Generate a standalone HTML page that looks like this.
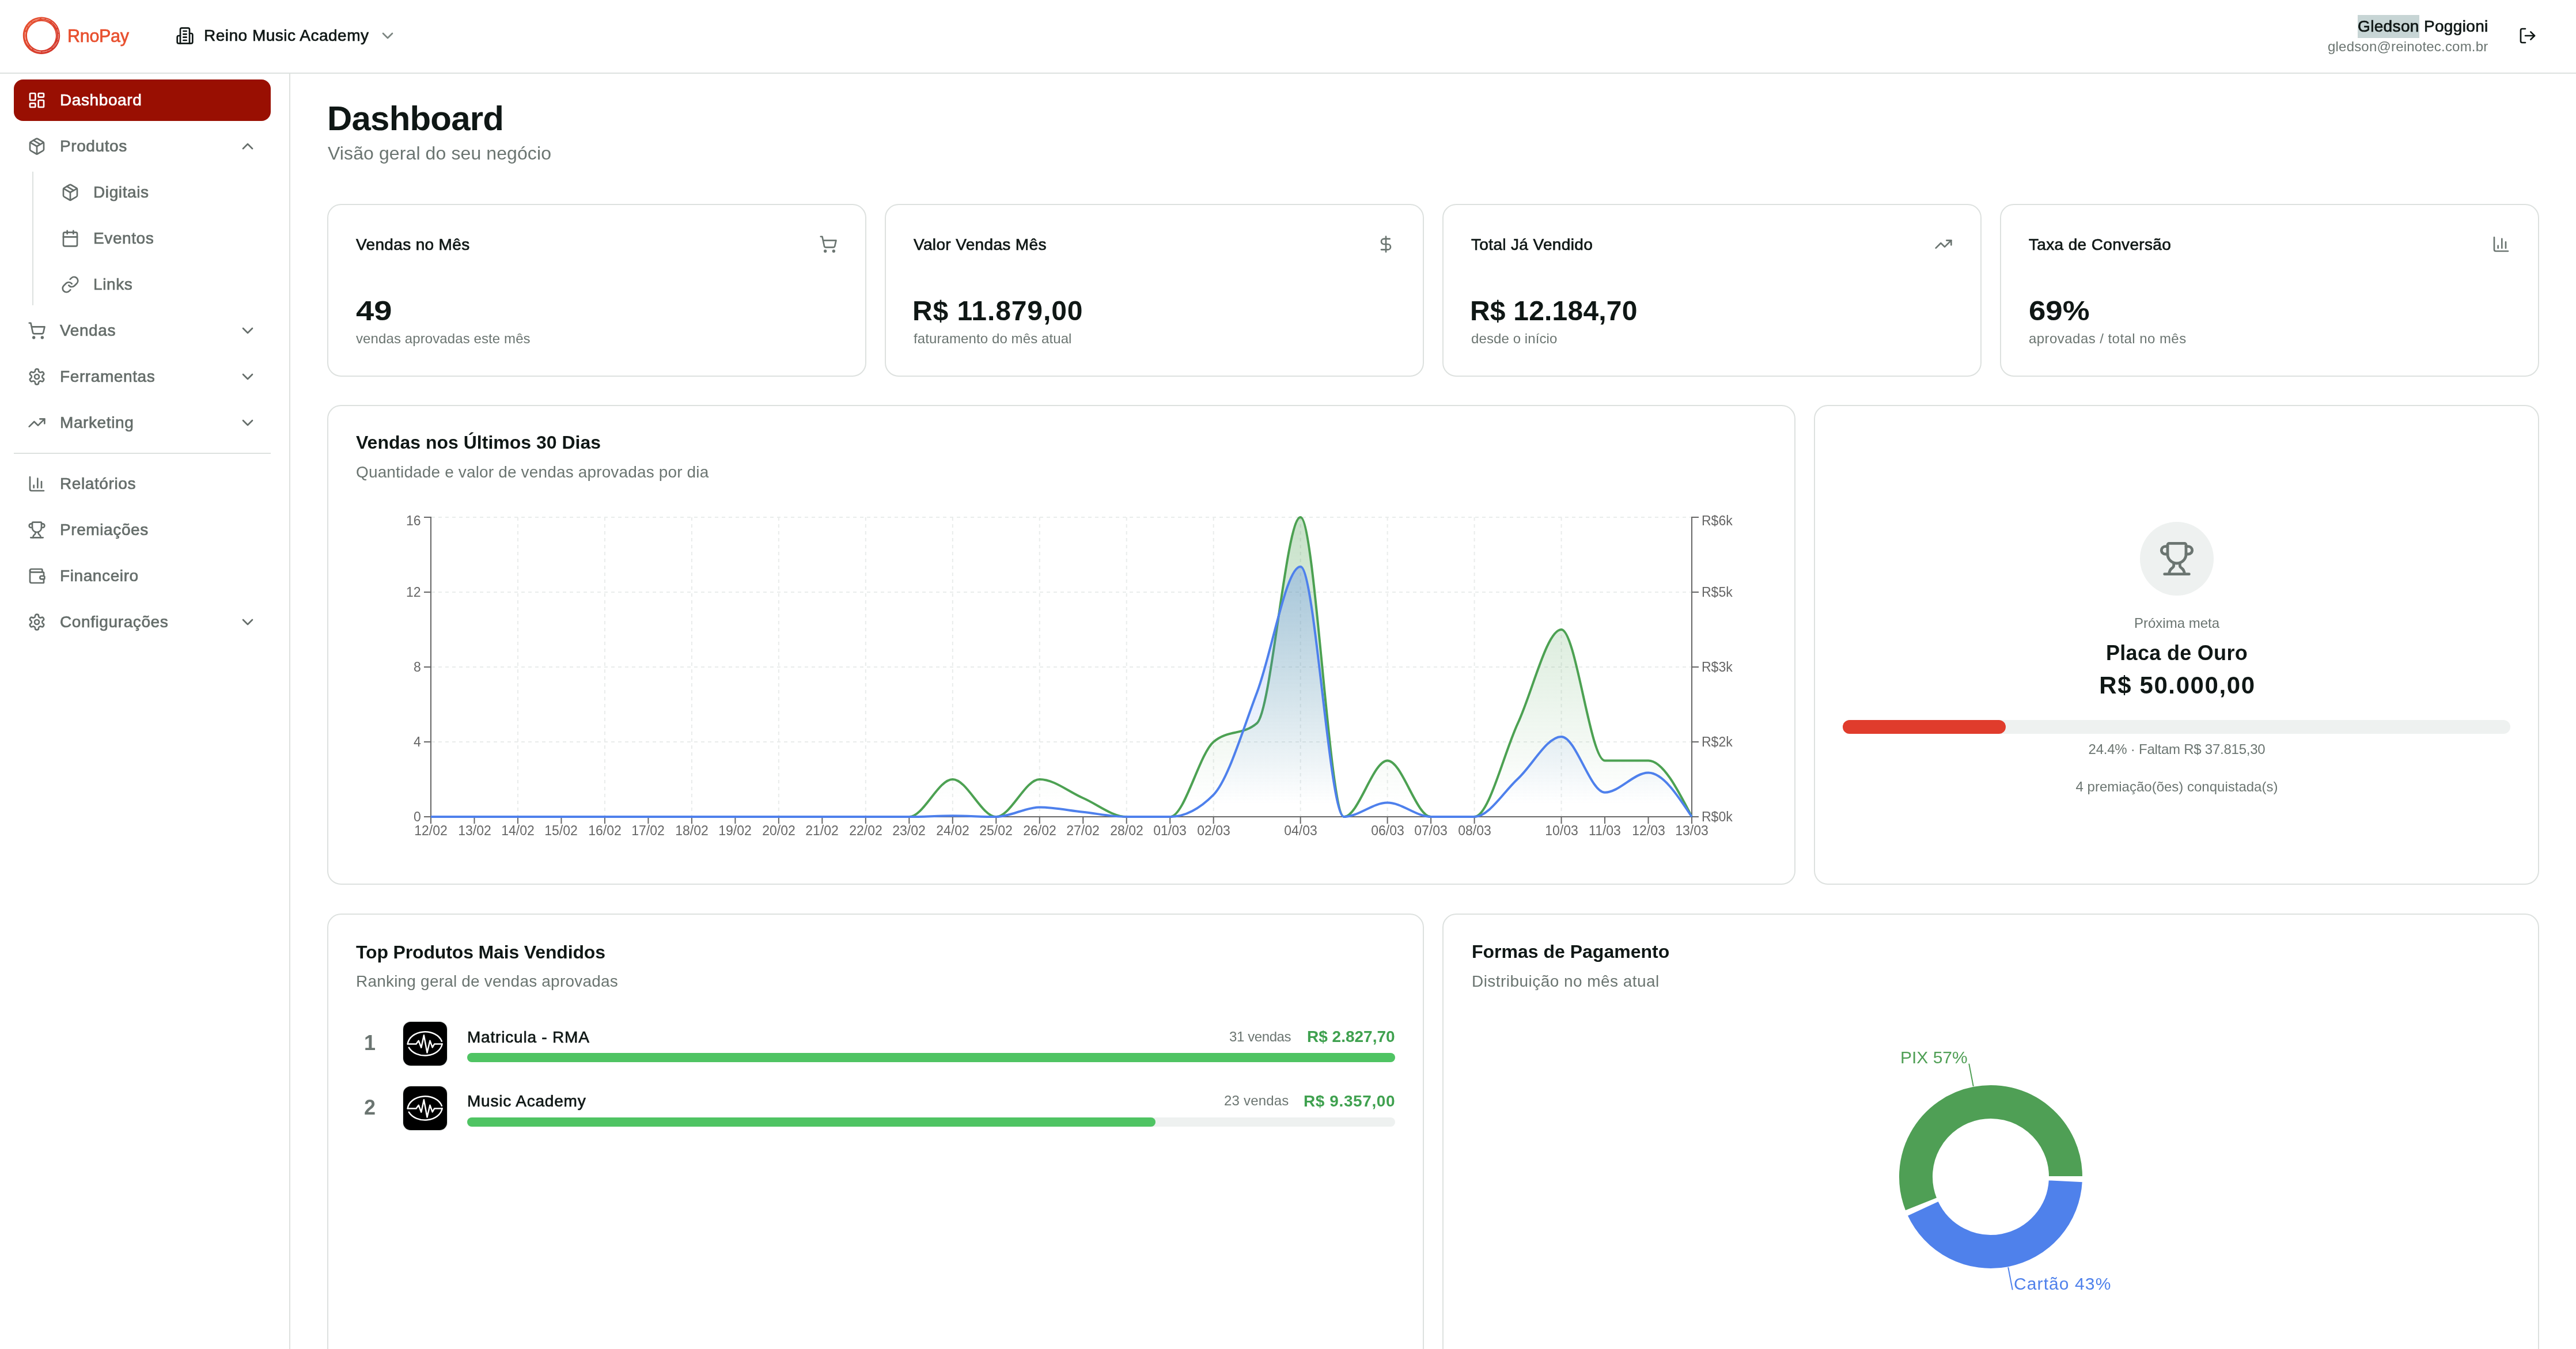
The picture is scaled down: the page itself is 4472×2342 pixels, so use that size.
<!DOCTYPE html>
<html><head><meta charset="utf-8"><title>Dashboard</title>
<style>
html,body{margin:0;padding:0;}
body{width:4472px;height:2342px;overflow:hidden;position:relative;background:#ffffff;font-family:"Liberation Sans",sans-serif;}
.t{position:absolute;white-space:nowrap;line-height:1;will-change:transform;}
svg{overflow:visible}
</style></head><body>
<div style="position:absolute;left:0px;top:126px;width:4472px;height:2px;background:#dde1df"></div>
<svg style="position:absolute;left:36px;top:26px" width="72" height="72" viewBox="0 0 72 72"><defs><linearGradient id="lg" x1="0" y1="0" x2="1" y2="1"><stop offset="0" stop-color="#ea5430"/><stop offset="1" stop-color="#cf3129"/></linearGradient></defs><path fill-rule="evenodd" fill="url(#lg)" d="M36,3.6 C54,3.6 68.2,17.6 68.2,35.6 C68.2,53.8 54,68 36,68 C18,68 3.8,53.8 3.8,35.8 C3.8,17.8 18,3.6 36,3.6 Z M36,10.7 C22.4,10.7 11,21.8 11,35.9 C11,50 22.4,61.2 36.2,61.2 C50,61.2 60.9,50 60.9,35.8 C60.9,21.7 49.8,10.7 36,10.7 Z"/><ellipse cx="36.6" cy="35.2" rx="29.2" ry="29" fill="none" stroke="#fff" stroke-width="0.7" stroke-dasharray="9 2 14 3 6 2" opacity="0.85"/><ellipse cx="35.4" cy="36.4" rx="27.6" ry="27.9" fill="none" stroke="#fff" stroke-width="0.5" stroke-dasharray="4 9 12 5" opacity="0.6"/></svg>
<div class="t" style="left:117.0px;top:47.4px;font-size:30.5px;color:#e8502f;letter-spacing:-0.3px;-webkit-text-stroke:0.7px #e8502f;">RnoPay</div>
<svg style="position:absolute;left:305px;top:46px" width="32" height="32" viewBox="0 0 24 24" fill="none" stroke="#0f1715" stroke-width="2" stroke-linecap="round" stroke-linejoin="round"><path d="M6 22V4a2 2 0 0 1 2-2h8a2 2 0 0 1 2 2v18Z"/><path d="M6 12H4a2 2 0 0 0-2 2v6a2 2 0 0 0 2 2h2"/><path d="M18 9h2a2 2 0 0 1 2 2v9a2 2 0 0 1-2 2h-2"/><path d="M10 6h4"/><path d="M10 10h4"/><path d="M10 14h4"/><path d="M10 18h4"/></svg>
<div class="t" style="left:354.0px;top:48.3px;font-size:28px;color:#0f1715;letter-spacing:0.5px;-webkit-text-stroke:0.7px #0f1715;">Reino Music Academy</div>
<svg style="position:absolute;left:657px;top:46px" width="32" height="32" viewBox="0 0 24 24" fill="none" stroke="#7b8581" stroke-width="2" stroke-linecap="round" stroke-linejoin="round"><path d="m6 9 6 6 6-6"/></svg>
<div class="t" style="right:152.7px;top:32.0px;font-size:28px;color:#0f1715;letter-spacing:0.35px;-webkit-text-stroke:0.7px #0f1715;"><span style="background:#c7d5d5;padding:4.4px 0 5px 0">Gledson</span> Poggioni</div>
<div class="t" style="right:152.8px;top:69.2px;font-size:24px;color:#6b7571;letter-spacing:0.2px;">gledson@reinotec.com.br</div>
<svg style="position:absolute;left:4372px;top:46px" width="32" height="32" viewBox="0 0 24 24" fill="none" stroke="#0f1715" stroke-width="2" stroke-linecap="round" stroke-linejoin="round"><path d="M9 21H5a2 2 0 0 1-2-2V5a2 2 0 0 1 2-2h4"/><polyline points="16 17 21 12 16 7"/><line x1="21" x2="9" y1="12" y2="12"/></svg>
<div style="position:absolute;left:502px;top:128px;width:2px;height:2214px;background:#dde1df"></div>
<div style="position:absolute;left:24px;top:138px;width:446px;height:72px;background:#990f02;border-radius:16px"></div>
<svg style="position:absolute;left:48px;top:158px" width="32" height="32" viewBox="0 0 24 24" fill="none" stroke="#ffffff" stroke-width="2" stroke-linecap="round" stroke-linejoin="round"><rect x="3" y="3" width="7" height="9" rx="1"/><rect x="14" y="3" width="7" height="5" rx="1"/><rect x="14" y="12" width="7" height="9" rx="1"/><rect x="3" y="16" width="7" height="5" rx="1"/></svg>
<div class="t" style="left:104.0px;top:160.3px;font-size:28px;color:#ffffff;letter-spacing:0.6px;-webkit-text-stroke:0.7px #ffffff;">Dashboard</div>
<svg style="position:absolute;left:48px;top:238px" width="32" height="32" viewBox="0 0 24 24" fill="none" stroke="#656d6a" stroke-width="2" stroke-linecap="round" stroke-linejoin="round"><path d="m7.5 4.27 9 5.15"/><path d="M21 8a2 2 0 0 0-1-1.73l-7-4a2 2 0 0 0-2 0l-7 4A2 2 0 0 0 3 8v8a2 2 0 0 0 1 1.73l7 4a2 2 0 0 0 2 0l7-4A2 2 0 0 0 21 16Z"/><path d="m3.3 7 8.7 5 8.7-5"/><path d="M12 22V12"/></svg>
<div class="t" style="left:104.0px;top:240.3px;font-size:28px;color:#656d6a;letter-spacing:0.6px;-webkit-text-stroke:0.7px #656d6a;">Produtos</div>
<svg style="position:absolute;left:414px;top:238px" width="32" height="32" viewBox="0 0 24 24" fill="none" stroke="#656d6a" stroke-width="2" stroke-linecap="round" stroke-linejoin="round"><path d="m18 15-6-6-6 6"/></svg>
<svg style="position:absolute;left:106px;top:318px" width="32" height="32" viewBox="0 0 24 24" fill="none" stroke="#656d6a" stroke-width="2" stroke-linecap="round" stroke-linejoin="round"><path d="m7.5 4.27 9 5.15"/><path d="M21 8a2 2 0 0 0-1-1.73l-7-4a2 2 0 0 0-2 0l-7 4A2 2 0 0 0 3 8v8a2 2 0 0 0 1 1.73l7 4a2 2 0 0 0 2 0l7-4A2 2 0 0 0 21 16Z"/><path d="m3.3 7 8.7 5 8.7-5"/><path d="M12 22V12"/></svg>
<div class="t" style="left:162.0px;top:320.3px;font-size:28px;color:#656d6a;letter-spacing:0.6px;-webkit-text-stroke:0.7px #656d6a;">Digitais</div>
<svg style="position:absolute;left:106px;top:398px" width="32" height="32" viewBox="0 0 24 24" fill="none" stroke="#656d6a" stroke-width="2" stroke-linecap="round" stroke-linejoin="round"><path d="M8 2v4"/><path d="M16 2v4"/><rect width="18" height="18" x="3" y="4" rx="2"/><path d="M3 10h18"/></svg>
<div class="t" style="left:162.0px;top:400.3px;font-size:28px;color:#656d6a;letter-spacing:0.6px;-webkit-text-stroke:0.7px #656d6a;">Eventos</div>
<svg style="position:absolute;left:106px;top:478px" width="32" height="32" viewBox="0 0 24 24" fill="none" stroke="#656d6a" stroke-width="2" stroke-linecap="round" stroke-linejoin="round"><path d="M10 13a5 5 0 0 0 7.54.54l3-3a5 5 0 0 0-7.07-7.07l-1.72 1.71"/><path d="M14 11a5 5 0 0 0-7.54-.54l-3 3a5 5 0 0 0 7.07 7.07l1.71-1.71"/></svg>
<div class="t" style="left:162.0px;top:480.3px;font-size:28px;color:#656d6a;letter-spacing:0.6px;-webkit-text-stroke:0.7px #656d6a;">Links</div>
<svg style="position:absolute;left:48px;top:558px" width="32" height="32" viewBox="0 0 24 24" fill="none" stroke="#656d6a" stroke-width="2" stroke-linecap="round" stroke-linejoin="round"><circle cx="8" cy="21" r="1"/><circle cx="19" cy="21" r="1"/><path d="M2.05 2.05h2l2.66 12.42a2 2 0 0 0 2 1.58h9.78a2 2 0 0 0 1.95-1.57l1.65-7.43H5.12"/></svg>
<div class="t" style="left:104.0px;top:560.3px;font-size:28px;color:#656d6a;letter-spacing:0.6px;-webkit-text-stroke:0.7px #656d6a;">Vendas</div>
<svg style="position:absolute;left:414px;top:558px" width="32" height="32" viewBox="0 0 24 24" fill="none" stroke="#656d6a" stroke-width="2" stroke-linecap="round" stroke-linejoin="round"><path d="m6 9 6 6 6-6"/></svg>
<svg style="position:absolute;left:48px;top:638px" width="32" height="32" viewBox="0 0 24 24" fill="none" stroke="#656d6a" stroke-width="2" stroke-linecap="round" stroke-linejoin="round"><path d="M12.22 2h-.44a2 2 0 0 0-2 2v.18a2 2 0 0 1-1 1.73l-.43.25a2 2 0 0 1-2 0l-.15-.08a2 2 0 0 0-2.73.73l-.22.38a2 2 0 0 0 .73 2.73l.15.1a2 2 0 0 1 1 1.72v.51a2 2 0 0 1-1 1.74l-.15.09a2 2 0 0 0-.73 2.73l.22.38a2 2 0 0 0 2.73.73l.15-.08a2 2 0 0 1 2 0l.43.25a2 2 0 0 1 1 1.73V20a2 2 0 0 0 2 2h.44a2 2 0 0 0 2-2v-.18a2 2 0 0 1 1-1.73l.43-.25a2 2 0 0 1 2 0l.15.08a2 2 0 0 0 2.73-.73l.22-.39a2 2 0 0 0-.73-2.73l-.15-.08a2 2 0 0 1-1-1.74v-.5a2 2 0 0 1 1-1.74l.15-.09a2 2 0 0 0 .73-2.73l-.22-.38a2 2 0 0 0-2.73-.73l-.15.08a2 2 0 0 1-2 0l-.43-.25a2 2 0 0 1-1-1.73V4a2 2 0 0 0-2-2z"/><circle cx="12" cy="12" r="3"/></svg>
<div class="t" style="left:104.0px;top:640.3px;font-size:28px;color:#656d6a;letter-spacing:0.6px;-webkit-text-stroke:0.7px #656d6a;">Ferramentas</div>
<svg style="position:absolute;left:414px;top:638px" width="32" height="32" viewBox="0 0 24 24" fill="none" stroke="#656d6a" stroke-width="2" stroke-linecap="round" stroke-linejoin="round"><path d="m6 9 6 6 6-6"/></svg>
<svg style="position:absolute;left:48px;top:718px" width="32" height="32" viewBox="0 0 24 24" fill="none" stroke="#656d6a" stroke-width="2" stroke-linecap="round" stroke-linejoin="round"><path d="M22 7l-8.5 8.5-5-5L2 17"/><path d="M16 7h6v6"/></svg>
<div class="t" style="left:104.0px;top:720.3px;font-size:28px;color:#656d6a;letter-spacing:0.6px;-webkit-text-stroke:0.7px #656d6a;">Marketing</div>
<svg style="position:absolute;left:414px;top:718px" width="32" height="32" viewBox="0 0 24 24" fill="none" stroke="#656d6a" stroke-width="2" stroke-linecap="round" stroke-linejoin="round"><path d="m6 9 6 6 6-6"/></svg>
<svg style="position:absolute;left:48px;top:824px" width="32" height="32" viewBox="0 0 24 24" fill="none" stroke="#656d6a" stroke-width="2" stroke-linecap="round" stroke-linejoin="round"><path d="M3 3v16a2 2 0 0 0 2 2h16"/><path d="M18 17V9"/><path d="M13 17V5"/><path d="M8 17v-3"/></svg>
<div class="t" style="left:104.0px;top:826.3px;font-size:28px;color:#656d6a;letter-spacing:0.6px;-webkit-text-stroke:0.7px #656d6a;">Relatórios</div>
<svg style="position:absolute;left:48px;top:904px" width="32" height="32" viewBox="0 0 24 24" fill="none" stroke="#656d6a" stroke-width="2" stroke-linecap="round" stroke-linejoin="round"><path d="M10 14.66v1.626a2 2 0 0 1-.976 1.696A5 5 0 0 0 7 21.978"/><path d="M14 14.66v1.626a2 2 0 0 0 .976 1.696A5 5 0 0 1 17 21.978"/><path d="M18 9h1.5a1 1 0 0 0 0-5H18"/><path d="M4 22h16"/><path d="M6 9a6 6 0 0 0 12 0V3a1 1 0 0 0-1-1H7a1 1 0 0 0-1 1z"/><path d="M6 9H4.5a1 1 0 0 1 0-5H6"/></svg>
<div class="t" style="left:104.0px;top:906.3px;font-size:28px;color:#656d6a;letter-spacing:0.6px;-webkit-text-stroke:0.7px #656d6a;">Premiações</div>
<svg style="position:absolute;left:48px;top:984px" width="32" height="32" viewBox="0 0 24 24" fill="none" stroke="#656d6a" stroke-width="2" stroke-linecap="round" stroke-linejoin="round"><path d="M19 7V4a1 1 0 0 0-1-1H5a2 2 0 0 0 0 4h15a1 1 0 0 1 1 1v4h-3a2 2 0 0 0 0 4h3a1 1 0 0 0 1-1v-2a1 1 0 0 0-1-1"/><path d="M3 5v14a2 2 0 0 0 2 2h15a1 1 0 0 0 1-1v-4"/></svg>
<div class="t" style="left:104.0px;top:986.3px;font-size:28px;color:#656d6a;letter-spacing:0.6px;-webkit-text-stroke:0.7px #656d6a;">Financeiro</div>
<svg style="position:absolute;left:48px;top:1064px" width="32" height="32" viewBox="0 0 24 24" fill="none" stroke="#656d6a" stroke-width="2" stroke-linecap="round" stroke-linejoin="round"><path d="M12.22 2h-.44a2 2 0 0 0-2 2v.18a2 2 0 0 1-1 1.73l-.43.25a2 2 0 0 1-2 0l-.15-.08a2 2 0 0 0-2.73.73l-.22.38a2 2 0 0 0 .73 2.73l.15.1a2 2 0 0 1 1 1.72v.51a2 2 0 0 1-1 1.74l-.15.09a2 2 0 0 0-.73 2.73l.22.38a2 2 0 0 0 2.73.73l.15-.08a2 2 0 0 1 2 0l.43.25a2 2 0 0 1 1 1.73V20a2 2 0 0 0 2 2h.44a2 2 0 0 0 2-2v-.18a2 2 0 0 1 1-1.73l.43-.25a2 2 0 0 1 2 0l.15.08a2 2 0 0 0 2.73-.73l.22-.39a2 2 0 0 0-.73-2.73l-.15-.08a2 2 0 0 1-1-1.74v-.5a2 2 0 0 1 1-1.74l.15-.09a2 2 0 0 0 .73-2.73l-.22-.38a2 2 0 0 0-2.73-.73l-.15.08a2 2 0 0 1-2 0l-.43-.25a2 2 0 0 1-1-1.73V4a2 2 0 0 0-2-2z"/><circle cx="12" cy="12" r="3"/></svg>
<div class="t" style="left:104.0px;top:1066.3px;font-size:28px;color:#656d6a;letter-spacing:0.6px;-webkit-text-stroke:0.7px #656d6a;">Configurações</div>
<svg style="position:absolute;left:414px;top:1064px" width="32" height="32" viewBox="0 0 24 24" fill="none" stroke="#656d6a" stroke-width="2" stroke-linecap="round" stroke-linejoin="round"><path d="m6 9 6 6 6-6"/></svg>
<div style="position:absolute;left:56px;top:298px;width:2px;height:232px;background:#dde1df"></div>
<div style="position:absolute;left:24px;top:786px;width:446px;height:2px;background:#dde1df"></div>
<div class="t" style="left:567.5px;top:176.2px;font-size:60px;color:#0f1715;font-weight:700;letter-spacing:-0.8px;">Dashboard</div>
<div class="t" style="left:569.0px;top:249.6px;font-size:32px;color:#6b7571;letter-spacing:0.1px;">Visão geral do seu negócio</div>
<div style="position:absolute;left:568px;top:354px;width:932px;height:296px;border:2px solid #dde1df;border-radius:24px;background:#fff;"></div>
<div class="t" style="left:618.0px;top:410.6px;font-size:28px;color:#0f1715;letter-spacing:0.35px;-webkit-text-stroke:0.7px #0f1715;">Vendas no Mês</div>
<svg style="position:absolute;left:1422px;top:408px" width="32" height="32" viewBox="0 0 24 24" fill="none" stroke="#6b7571" stroke-width="2" stroke-linecap="round" stroke-linejoin="round"><circle cx="8" cy="21" r="1"/><circle cx="19" cy="21" r="1"/><path d="M2.05 2.05h2l2.66 12.42a2 2 0 0 0 2 1.58h9.78a2 2 0 0 0 1.95-1.57l1.65-7.43H5.12"/></svg>
<div class="t" style="left:618.0px;top:516.4px;font-size:48px;color:#0f1715;font-weight:700;transform:scaleX(1.17);transform-origin:left center;">49</div>
<div class="t" style="left:618.0px;top:576.1px;font-size:24px;color:#6b7571;letter-spacing:0.1px;">vendas aprovadas este mês</div>
<div style="position:absolute;left:1536px;top:354px;width:932px;height:296px;border:2px solid #dde1df;border-radius:24px;background:#fff;"></div>
<div class="t" style="left:1586.0px;top:410.6px;font-size:28px;color:#0f1715;letter-spacing:0.35px;-webkit-text-stroke:0.7px #0f1715;">Valor Vendas Mês</div>
<svg style="position:absolute;left:2390px;top:408px" width="32" height="32" viewBox="0 0 24 24" fill="none" stroke="#6b7571" stroke-width="2" stroke-linecap="round" stroke-linejoin="round"><line x1="12" x2="12" y1="2" y2="22"/><path d="M17 5H9.5a3.5 3.5 0 0 0 0 7h5a3.5 3.5 0 0 1 0 7H6"/></svg>
<div class="t" style="left:1584.0px;top:516.4px;font-size:48px;color:#0f1715;font-weight:700;letter-spacing:0.9px;">R$ 11.879,00</div>
<div class="t" style="left:1586.0px;top:576.1px;font-size:24px;color:#6b7571;letter-spacing:0.1px;">faturamento do mês atual</div>
<div style="position:absolute;left:2504px;top:354px;width:932px;height:296px;border:2px solid #dde1df;border-radius:24px;background:#fff;"></div>
<div class="t" style="left:2554.0px;top:410.6px;font-size:28px;color:#0f1715;letter-spacing:0.35px;-webkit-text-stroke:0.7px #0f1715;">Total Já Vendido</div>
<svg style="position:absolute;left:3358px;top:408px" width="32" height="32" viewBox="0 0 24 24" fill="none" stroke="#6b7571" stroke-width="2" stroke-linecap="round" stroke-linejoin="round"><path d="M22 7l-8.5 8.5-5-5L2 17"/><path d="M16 7h6v6"/></svg>
<div class="t" style="left:2551.5px;top:516.4px;font-size:48px;color:#0f1715;font-weight:700;letter-spacing:0.2px;">R$ 12.184,70</div>
<div class="t" style="left:2554.0px;top:576.1px;font-size:24px;color:#6b7571;letter-spacing:0.1px;">desde o início</div>
<div style="position:absolute;left:3472px;top:354px;width:932px;height:296px;border:2px solid #dde1df;border-radius:24px;background:#fff;"></div>
<div class="t" style="left:3522.0px;top:410.6px;font-size:28px;color:#0f1715;letter-spacing:0.35px;-webkit-text-stroke:0.7px #0f1715;">Taxa de Conversão</div>
<svg style="position:absolute;left:4326px;top:408px" width="32" height="32" viewBox="0 0 24 24" fill="none" stroke="#6b7571" stroke-width="2" stroke-linecap="round" stroke-linejoin="round"><path d="M3 3v16a2 2 0 0 0 2 2h16"/><path d="M18 17V9"/><path d="M13 17V5"/><path d="M8 17v-3"/></svg>
<div class="t" style="left:3522.0px;top:516.4px;font-size:48px;color:#0f1715;font-weight:700;transform:scaleX(1.1);transform-origin:left center;">69%</div>
<div class="t" style="left:3522.0px;top:576.1px;font-size:24px;color:#6b7571;letter-spacing:0.45px;">aprovadas / total no mês</div>
<div style="position:absolute;left:568px;top:703px;width:2545px;height:829px;border:2px solid #dde1df;border-radius:24px;background:#fff;"></div>
<div class="t" style="left:618.0px;top:751.6px;font-size:32px;color:#0f1715;font-weight:700;">Vendas nos Últimos 30 Dias</div>
<div class="t" style="left:618.0px;top:806.3px;font-size:28px;color:#6b7571;letter-spacing:0.15px;">Quantidade e valor de vendas aprovadas por dia</div>
<svg style="position:absolute;left:0;top:0" width="4472" height="2342" viewBox="0 0 4472 2342"><defs><linearGradient id="gg" x1="0" y1="0" x2="0" y2="1"><stop offset="5%" stop-color="#4ca152" stop-opacity="0.3"/><stop offset="95%" stop-color="#4ca152" stop-opacity="0"/></linearGradient><linearGradient id="bg" x1="0" y1="0" x2="0" y2="1"><stop offset="5%" stop-color="#4e80ec" stop-opacity="0.3"/><stop offset="95%" stop-color="#4e80ec" stop-opacity="0"/></linearGradient></defs><line x1="749.0" y1="898.0" x2="2936.0" y2="898.0" stroke="#e9eceb" stroke-width="2" stroke-dasharray="6 6"/><line x1="749.0" y1="1028.0" x2="2936.0" y2="1028.0" stroke="#e9eceb" stroke-width="2" stroke-dasharray="6 6"/><line x1="749.0" y1="1158.0" x2="2936.0" y2="1158.0" stroke="#e9eceb" stroke-width="2" stroke-dasharray="6 6"/><line x1="749.0" y1="1288.0" x2="2936.0" y2="1288.0" stroke="#e9eceb" stroke-width="2" stroke-dasharray="6 6"/><line x1="898.97" y1="898.0" x2="898.97" y2="1418.0" stroke="#e9eceb" stroke-width="2" stroke-dasharray="6 6"/><line x1="1049.93" y1="898.0" x2="1049.93" y2="1418.0" stroke="#e9eceb" stroke-width="2" stroke-dasharray="6 6"/><line x1="1200.90" y1="898.0" x2="1200.90" y2="1418.0" stroke="#e9eceb" stroke-width="2" stroke-dasharray="6 6"/><line x1="1351.86" y1="898.0" x2="1351.86" y2="1418.0" stroke="#e9eceb" stroke-width="2" stroke-dasharray="6 6"/><line x1="1502.83" y1="898.0" x2="1502.83" y2="1418.0" stroke="#e9eceb" stroke-width="2" stroke-dasharray="6 6"/><line x1="1653.79" y1="898.0" x2="1653.79" y2="1418.0" stroke="#e9eceb" stroke-width="2" stroke-dasharray="6 6"/><line x1="1804.76" y1="898.0" x2="1804.76" y2="1418.0" stroke="#e9eceb" stroke-width="2" stroke-dasharray="6 6"/><line x1="1955.72" y1="898.0" x2="1955.72" y2="1418.0" stroke="#e9eceb" stroke-width="2" stroke-dasharray="6 6"/><line x1="2106.69" y1="898.0" x2="2106.69" y2="1418.0" stroke="#e9eceb" stroke-width="2" stroke-dasharray="6 6"/><line x1="2257.66" y1="898.0" x2="2257.66" y2="1418.0" stroke="#e9eceb" stroke-width="2" stroke-dasharray="6 6"/><line x1="2408.62" y1="898.0" x2="2408.62" y2="1418.0" stroke="#e9eceb" stroke-width="2" stroke-dasharray="6 6"/><line x1="2559.59" y1="898.0" x2="2559.59" y2="1418.0" stroke="#e9eceb" stroke-width="2" stroke-dasharray="6 6"/><line x1="2710.55" y1="898.0" x2="2710.55" y2="1418.0" stroke="#e9eceb" stroke-width="2" stroke-dasharray="6 6"/><line x1="748.0" y1="897.0" x2="748.0" y2="1419.0" stroke="#666666" stroke-width="2"/><line x1="2937.0" y1="897.0" x2="2937.0" y2="1419.0" stroke="#666666" stroke-width="2"/><line x1="747.0" y1="1418.0" x2="2938.0" y2="1418.0" stroke="#666666" stroke-width="2"/><line x1="736.0" y1="898.0" x2="748.0" y2="898.0" stroke="#666666" stroke-width="2"/><line x1="736.0" y1="1028.0" x2="748.0" y2="1028.0" stroke="#666666" stroke-width="2"/><line x1="736.0" y1="1158.0" x2="748.0" y2="1158.0" stroke="#666666" stroke-width="2"/><line x1="736.0" y1="1288.0" x2="748.0" y2="1288.0" stroke="#666666" stroke-width="2"/><line x1="736.0" y1="1418.0" x2="748.0" y2="1418.0" stroke="#666666" stroke-width="2"/><line x1="2937.0" y1="898.0" x2="2949.0" y2="898.0" stroke="#666666" stroke-width="2"/><line x1="2937.0" y1="1028.0" x2="2949.0" y2="1028.0" stroke="#666666" stroke-width="2"/><line x1="2937.0" y1="1158.0" x2="2949.0" y2="1158.0" stroke="#666666" stroke-width="2"/><line x1="2937.0" y1="1288.0" x2="2949.0" y2="1288.0" stroke="#666666" stroke-width="2"/><line x1="2937.0" y1="1418.0" x2="2949.0" y2="1418.0" stroke="#666666" stroke-width="2"/><line x1="748.00" y1="1418.0" x2="748.00" y2="1430.0" stroke="#666666" stroke-width="2"/><line x1="823.48" y1="1418.0" x2="823.48" y2="1430.0" stroke="#666666" stroke-width="2"/><line x1="898.97" y1="1418.0" x2="898.97" y2="1430.0" stroke="#666666" stroke-width="2"/><line x1="974.45" y1="1418.0" x2="974.45" y2="1430.0" stroke="#666666" stroke-width="2"/><line x1="1049.93" y1="1418.0" x2="1049.93" y2="1430.0" stroke="#666666" stroke-width="2"/><line x1="1125.41" y1="1418.0" x2="1125.41" y2="1430.0" stroke="#666666" stroke-width="2"/><line x1="1200.90" y1="1418.0" x2="1200.90" y2="1430.0" stroke="#666666" stroke-width="2"/><line x1="1276.38" y1="1418.0" x2="1276.38" y2="1430.0" stroke="#666666" stroke-width="2"/><line x1="1351.86" y1="1418.0" x2="1351.86" y2="1430.0" stroke="#666666" stroke-width="2"/><line x1="1427.34" y1="1418.0" x2="1427.34" y2="1430.0" stroke="#666666" stroke-width="2"/><line x1="1502.83" y1="1418.0" x2="1502.83" y2="1430.0" stroke="#666666" stroke-width="2"/><line x1="1578.31" y1="1418.0" x2="1578.31" y2="1430.0" stroke="#666666" stroke-width="2"/><line x1="1653.79" y1="1418.0" x2="1653.79" y2="1430.0" stroke="#666666" stroke-width="2"/><line x1="1729.28" y1="1418.0" x2="1729.28" y2="1430.0" stroke="#666666" stroke-width="2"/><line x1="1804.76" y1="1418.0" x2="1804.76" y2="1430.0" stroke="#666666" stroke-width="2"/><line x1="1880.24" y1="1418.0" x2="1880.24" y2="1430.0" stroke="#666666" stroke-width="2"/><line x1="1955.72" y1="1418.0" x2="1955.72" y2="1430.0" stroke="#666666" stroke-width="2"/><line x1="2031.21" y1="1418.0" x2="2031.21" y2="1430.0" stroke="#666666" stroke-width="2"/><line x1="2106.69" y1="1418.0" x2="2106.69" y2="1430.0" stroke="#666666" stroke-width="2"/><line x1="2257.66" y1="1418.0" x2="2257.66" y2="1430.0" stroke="#666666" stroke-width="2"/><line x1="2408.62" y1="1418.0" x2="2408.62" y2="1430.0" stroke="#666666" stroke-width="2"/><line x1="2484.10" y1="1418.0" x2="2484.10" y2="1430.0" stroke="#666666" stroke-width="2"/><line x1="2559.59" y1="1418.0" x2="2559.59" y2="1430.0" stroke="#666666" stroke-width="2"/><line x1="2710.55" y1="1418.0" x2="2710.55" y2="1430.0" stroke="#666666" stroke-width="2"/><line x1="2786.03" y1="1418.0" x2="2786.03" y2="1430.0" stroke="#666666" stroke-width="2"/><line x1="2861.52" y1="1418.0" x2="2861.52" y2="1430.0" stroke="#666666" stroke-width="2"/><line x1="2937.00" y1="1418.0" x2="2937.00" y2="1430.0" stroke="#666666" stroke-width="2"/><path d="M748.00,1418.00C773.16,1418.00 798.32,1418.00 823.48,1418.00C848.64,1418.00 873.80,1418.00 898.97,1418.00C924.13,1418.00 949.29,1418.00 974.45,1418.00C999.61,1418.00 1024.77,1418.00 1049.93,1418.00C1075.09,1418.00 1100.25,1418.00 1125.41,1418.00C1150.57,1418.00 1175.74,1418.00 1200.90,1418.00C1226.06,1418.00 1251.22,1418.00 1276.38,1418.00C1301.54,1418.00 1326.70,1418.00 1351.86,1418.00C1377.02,1418.00 1402.18,1418.00 1427.34,1418.00C1452.51,1418.00 1477.67,1418.00 1502.83,1418.00C1527.99,1418.00 1553.15,1418.00 1578.31,1418.00C1603.47,1418.00 1628.63,1353.00 1653.79,1353.00C1678.95,1353.00 1704.11,1418.00 1729.28,1418.00C1754.44,1418.00 1779.60,1353.00 1804.76,1353.00C1829.92,1353.00 1855.08,1374.67 1880.24,1385.50C1905.40,1396.33 1930.56,1418.00 1955.72,1418.00C1980.89,1418.00 2006.05,1418.00 2031.21,1418.00C2056.37,1418.00 2081.53,1309.67 2106.69,1288.00C2131.85,1266.33 2157.01,1277.17 2182.17,1255.50C2207.33,1233.83 2232.49,898.00 2257.66,898.00C2282.82,898.00 2307.98,1418.00 2333.14,1418.00C2358.30,1418.00 2383.46,1320.50 2408.62,1320.50C2433.78,1320.50 2458.94,1418.00 2484.10,1418.00C2509.26,1418.00 2534.43,1418.00 2559.59,1418.00C2584.75,1418.00 2609.91,1309.67 2635.07,1255.50C2660.23,1201.33 2685.39,1093.00 2710.55,1093.00C2735.71,1093.00 2760.87,1320.50 2786.03,1320.50C2811.20,1320.50 2836.36,1320.50 2861.52,1320.50C2886.68,1320.50 2911.84,1369.25 2937.00,1418.00L2937.00,1418.0L748.00,1418.0Z" fill="url(#gg)" stroke="none"/><path d="M748.00,1418.00C773.16,1418.00 798.32,1418.00 823.48,1418.00C848.64,1418.00 873.80,1418.00 898.97,1418.00C924.13,1418.00 949.29,1418.00 974.45,1418.00C999.61,1418.00 1024.77,1418.00 1049.93,1418.00C1075.09,1418.00 1100.25,1418.00 1125.41,1418.00C1150.57,1418.00 1175.74,1418.00 1200.90,1418.00C1226.06,1418.00 1251.22,1418.00 1276.38,1418.00C1301.54,1418.00 1326.70,1418.00 1351.86,1418.00C1377.02,1418.00 1402.18,1418.00 1427.34,1418.00C1452.51,1418.00 1477.67,1418.00 1502.83,1418.00C1527.99,1418.00 1553.15,1418.00 1578.31,1418.00C1603.47,1418.00 1628.63,1353.00 1653.79,1353.00C1678.95,1353.00 1704.11,1418.00 1729.28,1418.00C1754.44,1418.00 1779.60,1353.00 1804.76,1353.00C1829.92,1353.00 1855.08,1374.67 1880.24,1385.50C1905.40,1396.33 1930.56,1418.00 1955.72,1418.00C1980.89,1418.00 2006.05,1418.00 2031.21,1418.00C2056.37,1418.00 2081.53,1309.67 2106.69,1288.00C2131.85,1266.33 2157.01,1277.17 2182.17,1255.50C2207.33,1233.83 2232.49,898.00 2257.66,898.00C2282.82,898.00 2307.98,1418.00 2333.14,1418.00C2358.30,1418.00 2383.46,1320.50 2408.62,1320.50C2433.78,1320.50 2458.94,1418.00 2484.10,1418.00C2509.26,1418.00 2534.43,1418.00 2559.59,1418.00C2584.75,1418.00 2609.91,1309.67 2635.07,1255.50C2660.23,1201.33 2685.39,1093.00 2710.55,1093.00C2735.71,1093.00 2760.87,1320.50 2786.03,1320.50C2811.20,1320.50 2836.36,1320.50 2861.52,1320.50C2886.68,1320.50 2911.84,1369.25 2937.00,1418.00" fill="none" stroke="#4ca152" stroke-width="4"/><path d="M748.00,1418.00C773.16,1418.00 798.32,1418.00 823.48,1418.00C848.64,1418.00 873.80,1418.00 898.97,1418.00C924.13,1418.00 949.29,1418.00 974.45,1418.00C999.61,1418.00 1024.77,1418.00 1049.93,1418.00C1075.09,1418.00 1100.25,1418.00 1125.41,1418.00C1150.57,1418.00 1175.74,1418.00 1200.90,1418.00C1226.06,1418.00 1251.22,1418.00 1276.38,1418.00C1301.54,1418.00 1326.70,1418.00 1351.86,1418.00C1377.02,1418.00 1402.18,1418.00 1427.34,1418.00C1452.51,1418.00 1477.67,1418.00 1502.83,1418.00C1527.99,1418.00 1553.15,1418.00 1578.31,1418.00C1603.47,1418.00 1628.63,1416.27 1653.79,1416.27C1678.95,1416.27 1704.11,1418.00 1729.28,1418.00C1754.44,1418.00 1779.60,1401.53 1804.76,1401.53C1829.92,1401.53 1855.08,1407.02 1880.24,1409.77C1905.40,1412.51 1930.56,1418.00 1955.72,1418.00C1980.89,1418.00 2006.05,1418.00 2031.21,1418.00C2056.37,1418.00 2081.53,1405.29 2106.69,1379.87C2131.85,1354.44 2157.01,1268.21 2182.17,1202.20C2207.33,1136.19 2232.49,983.80 2257.66,983.80C2282.82,983.80 2307.98,1418.00 2333.14,1418.00C2358.30,1418.00 2383.46,1393.56 2408.62,1393.56C2433.78,1393.56 2458.94,1418.00 2484.10,1418.00C2509.26,1418.00 2534.43,1418.00 2559.59,1418.00C2584.75,1418.00 2609.91,1375.14 2635.07,1351.96C2660.23,1328.78 2685.39,1278.90 2710.55,1278.90C2735.71,1278.90 2760.87,1375.71 2786.03,1375.71C2811.20,1375.71 2836.36,1341.56 2861.52,1341.56C2886.68,1341.56 2911.84,1379.78 2937.00,1418.00L2937.00,1418.0L748.00,1418.0Z" fill="url(#bg)" stroke="none"/><path d="M748.00,1418.00C773.16,1418.00 798.32,1418.00 823.48,1418.00C848.64,1418.00 873.80,1418.00 898.97,1418.00C924.13,1418.00 949.29,1418.00 974.45,1418.00C999.61,1418.00 1024.77,1418.00 1049.93,1418.00C1075.09,1418.00 1100.25,1418.00 1125.41,1418.00C1150.57,1418.00 1175.74,1418.00 1200.90,1418.00C1226.06,1418.00 1251.22,1418.00 1276.38,1418.00C1301.54,1418.00 1326.70,1418.00 1351.86,1418.00C1377.02,1418.00 1402.18,1418.00 1427.34,1418.00C1452.51,1418.00 1477.67,1418.00 1502.83,1418.00C1527.99,1418.00 1553.15,1418.00 1578.31,1418.00C1603.47,1418.00 1628.63,1416.27 1653.79,1416.27C1678.95,1416.27 1704.11,1418.00 1729.28,1418.00C1754.44,1418.00 1779.60,1401.53 1804.76,1401.53C1829.92,1401.53 1855.08,1407.02 1880.24,1409.77C1905.40,1412.51 1930.56,1418.00 1955.72,1418.00C1980.89,1418.00 2006.05,1418.00 2031.21,1418.00C2056.37,1418.00 2081.53,1405.29 2106.69,1379.87C2131.85,1354.44 2157.01,1268.21 2182.17,1202.20C2207.33,1136.19 2232.49,983.80 2257.66,983.80C2282.82,983.80 2307.98,1418.00 2333.14,1418.00C2358.30,1418.00 2383.46,1393.56 2408.62,1393.56C2433.78,1393.56 2458.94,1418.00 2484.10,1418.00C2509.26,1418.00 2534.43,1418.00 2559.59,1418.00C2584.75,1418.00 2609.91,1375.14 2635.07,1351.96C2660.23,1328.78 2685.39,1278.90 2710.55,1278.90C2735.71,1278.90 2760.87,1375.71 2786.03,1375.71C2811.20,1375.71 2836.36,1341.56 2861.52,1341.56C2886.68,1341.56 2911.84,1379.78 2937.00,1418.00" fill="none" stroke="#4e80ec" stroke-width="4"/></svg>
<div class="t" style="right:3741.0px;top:892.5px;font-size:23px;color:#666666;">16</div>
<div class="t" style="right:3741.0px;top:1016.5px;font-size:23px;color:#666666;">12</div>
<div class="t" style="right:3741.0px;top:1146.5px;font-size:23px;color:#666666;">8</div>
<div class="t" style="right:3741.0px;top:1276.5px;font-size:23px;color:#666666;">4</div>
<div class="t" style="right:3741.0px;top:1406.5px;font-size:23px;color:#666666;">0</div>
<div class="t" style="left:2954.0px;top:892.5px;font-size:23px;color:#666666;">R$6k</div>
<div class="t" style="left:2954.0px;top:1016.5px;font-size:23px;color:#666666;">R$5k</div>
<div class="t" style="left:2954.0px;top:1146.5px;font-size:23px;color:#666666;">R$3k</div>
<div class="t" style="left:2954.0px;top:1276.5px;font-size:23px;color:#666666;">R$2k</div>
<div class="t" style="left:2954.0px;top:1406.5px;font-size:23px;color:#666666;">R$0k</div>
<div class="t" style="left:-252.0px;width:2000px;text-align:center;top:1430.5px;font-size:23px;color:#666666;">12/02</div>
<div class="t" style="left:-176.5px;width:2000px;text-align:center;top:1430.5px;font-size:23px;color:#666666;">13/02</div>
<div class="t" style="left:-101.0px;width:2000px;text-align:center;top:1430.5px;font-size:23px;color:#666666;">14/02</div>
<div class="t" style="left:-25.6px;width:2000px;text-align:center;top:1430.5px;font-size:23px;color:#666666;">15/02</div>
<div class="t" style="left:49.9px;width:2000px;text-align:center;top:1430.5px;font-size:23px;color:#666666;">16/02</div>
<div class="t" style="left:125.4px;width:2000px;text-align:center;top:1430.5px;font-size:23px;color:#666666;">17/02</div>
<div class="t" style="left:200.9px;width:2000px;text-align:center;top:1430.5px;font-size:23px;color:#666666;">18/02</div>
<div class="t" style="left:276.4px;width:2000px;text-align:center;top:1430.5px;font-size:23px;color:#666666;">19/02</div>
<div class="t" style="left:351.9px;width:2000px;text-align:center;top:1430.5px;font-size:23px;color:#666666;">20/02</div>
<div class="t" style="left:427.3px;width:2000px;text-align:center;top:1430.5px;font-size:23px;color:#666666;">21/02</div>
<div class="t" style="left:502.8px;width:2000px;text-align:center;top:1430.5px;font-size:23px;color:#666666;">22/02</div>
<div class="t" style="left:578.3px;width:2000px;text-align:center;top:1430.5px;font-size:23px;color:#666666;">23/02</div>
<div class="t" style="left:653.8px;width:2000px;text-align:center;top:1430.5px;font-size:23px;color:#666666;">24/02</div>
<div class="t" style="left:729.3px;width:2000px;text-align:center;top:1430.5px;font-size:23px;color:#666666;">25/02</div>
<div class="t" style="left:804.8px;width:2000px;text-align:center;top:1430.5px;font-size:23px;color:#666666;">26/02</div>
<div class="t" style="left:880.2px;width:2000px;text-align:center;top:1430.5px;font-size:23px;color:#666666;">27/02</div>
<div class="t" style="left:955.7px;width:2000px;text-align:center;top:1430.5px;font-size:23px;color:#666666;">28/02</div>
<div class="t" style="left:1031.2px;width:2000px;text-align:center;top:1430.5px;font-size:23px;color:#666666;">01/03</div>
<div class="t" style="left:1106.7px;width:2000px;text-align:center;top:1430.5px;font-size:23px;color:#666666;">02/03</div>
<div class="t" style="left:1257.7px;width:2000px;text-align:center;top:1430.5px;font-size:23px;color:#666666;">04/03</div>
<div class="t" style="left:1408.6px;width:2000px;text-align:center;top:1430.5px;font-size:23px;color:#666666;">06/03</div>
<div class="t" style="left:1484.1px;width:2000px;text-align:center;top:1430.5px;font-size:23px;color:#666666;">07/03</div>
<div class="t" style="left:1559.6px;width:2000px;text-align:center;top:1430.5px;font-size:23px;color:#666666;">08/03</div>
<div class="t" style="left:1710.6px;width:2000px;text-align:center;top:1430.5px;font-size:23px;color:#666666;">10/03</div>
<div class="t" style="left:1786.0px;width:2000px;text-align:center;top:1430.5px;font-size:23px;color:#666666;">11/03</div>
<div class="t" style="left:1861.5px;width:2000px;text-align:center;top:1430.5px;font-size:23px;color:#666666;">12/03</div>
<div class="t" style="left:1937.0px;width:2000px;text-align:center;top:1430.5px;font-size:23px;color:#666666;">13/03</div>
<div style="position:absolute;left:3149px;top:703px;width:1255px;height:829px;border:2px solid #dde1df;border-radius:24px;background:#fff;"></div>
<div style="position:absolute;left:3715px;top:906px;width:128px;height:128px;background:#eef1f0;border-radius:50%"></div>
<svg style="position:absolute;left:3747px;top:938px" width="64" height="64" viewBox="0 0 24 24" fill="none" stroke="#6b7571" stroke-width="1.8" stroke-linecap="round" stroke-linejoin="round"><path d="M10 14.66v1.626a2 2 0 0 1-.976 1.696A5 5 0 0 0 7 21.978"/><path d="M14 14.66v1.626a2 2 0 0 0 .976 1.696A5 5 0 0 1 17 21.978"/><path d="M18 9h1.5a1 1 0 0 0 0-5H18"/><path d="M4 22h16"/><path d="M6 9a6 6 0 0 0 12 0V3a1 1 0 0 0-1-1H7a1 1 0 0 0-1 1z"/><path d="M6 9H4.5a1 1 0 0 1 0-5H6"/></svg>
<div class="t" style="left:2779.0px;width:2000px;text-align:center;top:1069.7px;font-size:24px;color:#6b7571;">Próxima meta</div>
<div class="t" style="left:2779.2px;width:2000px;text-align:center;top:1115.9px;font-size:36px;color:#0f1715;font-weight:700;letter-spacing:0.3px;">Placa de Ouro</div>
<div class="t" style="left:2779.8px;width:2000px;text-align:center;top:1168.8px;font-size:42px;color:#0f1715;font-weight:700;letter-spacing:1.6px;">R$ 50.000,00</div>
<div style="position:absolute;left:3199px;top:1250px;width:1159px;height:24px;background:#eef1f0;border-radius:12px"></div>
<div style="position:absolute;left:3199px;top:1250px;width:283px;height:24px;background:#e03c2c;border-radius:12px"></div>
<div class="t" style="left:2778.9px;width:2000px;text-align:center;top:1288.7px;font-size:24px;color:#6b7571;letter-spacing:-0.25px;">24.4% · Faltam R$ 37.815,30</div>
<div class="t" style="left:2779.0px;width:2000px;text-align:center;top:1353.7px;font-size:24px;color:#6b7571;">4 premiação(ões) conquistada(s)</div>
<div style="position:absolute;left:568px;top:1586px;width:1900px;height:896px;border:2px solid #dde1df;border-radius:24px;background:#fff;"></div>
<div class="t" style="left:618.0px;top:1636.9px;font-size:32px;color:#0f1715;font-weight:700;letter-spacing:-0.15px;">Top Produtos Mais Vendidos</div>
<div class="t" style="left:618.0px;top:1689.8px;font-size:28px;color:#6b7571;letter-spacing:0.2px;">Ranking geral de vendas aprovadas</div>
<div class="t" style="left:-358.5px;width:2000px;text-align:center;top:1793.2px;font-size:36px;color:#6b7571;font-weight:700;">1</div>
<div style="position:absolute;left:698px;top:1772px;width:80px;height:80px"><svg width="80" height="80" viewBox="0 0 80 80"><rect x="1" y="1" width="78" height="78" rx="14" fill="#dde1df"/><rect x="2" y="2" width="76" height="76" rx="13" fill="#000"/><g transform="translate(2,2)" fill="none" stroke="#fff" stroke-width="2.5" stroke-linecap="round" stroke-linejoin="round"><path d="M7.7,38.4 A30.3,23.2 0 0 1 66.9,33.8"/><path d="M9.8,44.7 A30.3,23.2 0 0 0 67.6,38.4"/><path d="M7.7,38.4 H22.5 L26.7,32.7 L31.3,44.7 L35.9,23.2 L41.5,53.5 L46.4,32.7 L50.7,44.4 L54.2,38.4 H67.6"/></g></svg></div>
<div class="t" style="left:811.0px;top:1786.9px;font-size:28px;color:#0f1715;letter-spacing:0.8px;-webkit-text-stroke:0.7px #0f1715;">Matricula - RMA</div>
<div class="t" style="right:2230.9px;top:1787.9px;font-size:24px;color:#6b7571;letter-spacing:-0.4px;">31 vendas</div>
<div class="t" style="right:2050.5px;top:1786.0px;font-size:28px;color:#3fa14f;font-weight:700;">R$ 2.827,70</div>
<div style="position:absolute;left:811px;top:1828px;width:1611px;height:16px;background:#eef1f0;border-radius:8px"></div>
<div style="position:absolute;left:811px;top:1828px;width:1611px;height:16px;background:#4fc463;border-radius:8px"></div>
<div class="t" style="left:-358.5px;width:2000px;text-align:center;top:1904.7px;font-size:36px;color:#6b7571;font-weight:700;">2</div>
<div style="position:absolute;left:698px;top:1884px;width:80px;height:80px"><svg width="80" height="80" viewBox="0 0 80 80"><rect x="1" y="1" width="78" height="78" rx="14" fill="#dde1df"/><rect x="2" y="2" width="76" height="76" rx="13" fill="#000"/><g transform="translate(2,2)" fill="none" stroke="#fff" stroke-width="2.5" stroke-linecap="round" stroke-linejoin="round"><path d="M7.7,38.4 A30.3,23.2 0 0 1 66.9,33.8"/><path d="M9.8,44.7 A30.3,23.2 0 0 0 67.6,38.4"/><path d="M7.7,38.4 H22.5 L26.7,32.7 L31.3,44.7 L35.9,23.2 L41.5,53.5 L46.4,32.7 L50.7,44.4 L54.2,38.4 H67.6"/></g></svg></div>
<div class="t" style="left:811.0px;top:1898.3px;font-size:28px;color:#0f1715;letter-spacing:0.8px;-webkit-text-stroke:0.7px #0f1715;">Music Academy</div>
<div class="t" style="right:2234.8px;top:1899.0px;font-size:24px;color:#6b7571;letter-spacing:0.2px;">23 vendas</div>
<div class="t" style="right:2049.9px;top:1898.1px;font-size:28px;color:#3fa14f;font-weight:700;letter-spacing:0.6px;">R$ 9.357,00</div>
<div style="position:absolute;left:811px;top:1940px;width:1611px;height:16px;background:#eef1f0;border-radius:8px"></div>
<div style="position:absolute;left:811px;top:1940px;width:1195px;height:16px;background:#4fc463;border-radius:8px"></div>
<div style="position:absolute;left:2504px;top:1586px;width:1900px;height:896px;border:2px solid #dde1df;border-radius:24px;background:#fff;"></div>
<div class="t" style="left:2555.0px;top:1636.3px;font-size:32px;color:#0f1715;font-weight:700;">Formas de Pagamento</div>
<div class="t" style="left:2555.0px;top:1689.5px;font-size:28px;color:#6b7571;letter-spacing:0.45px;">Distribuição no mês atual</div>
<svg style="position:absolute;left:0;top:0" width="4472" height="2342" viewBox="0 0 4472 2342"><path d="M3616.00,2043.00 A160.0,160.0 0 1 0 3307.42,2102.37 L3363.14,2080.10 A100.0,100.0 0 1 1 3556.00,2043.00 Z" fill="#4f9f55" stroke="#fff" stroke-width="2"/><path d="M3310.73,2110.06 A160.0,160.0 0 0 0 3615.78,2051.37 L3555.86,2048.23 A100.0,100.0 0 0 1 3365.21,2084.91 Z" fill="#4f81eb" stroke="#fff" stroke-width="2"/><path d="M3425.77,1885.88L3418.22,1846.60" stroke="#4f9f55" stroke-width="2" fill="none"/><path d="M3486.23,2200.12L3493.78,2239.40" stroke="#4f81eb" stroke-width="2" fill="none"/></svg>
<div class="t" style="right:1055.8px;top:1821.2px;font-size:30px;color:#4f9f55;">PIX 57%</div>
<div class="t" style="left:3495.8px;top:2214.0px;font-size:30px;color:#4f81eb;letter-spacing:1.1px;">Cartão 43%</div>
</body></html>
